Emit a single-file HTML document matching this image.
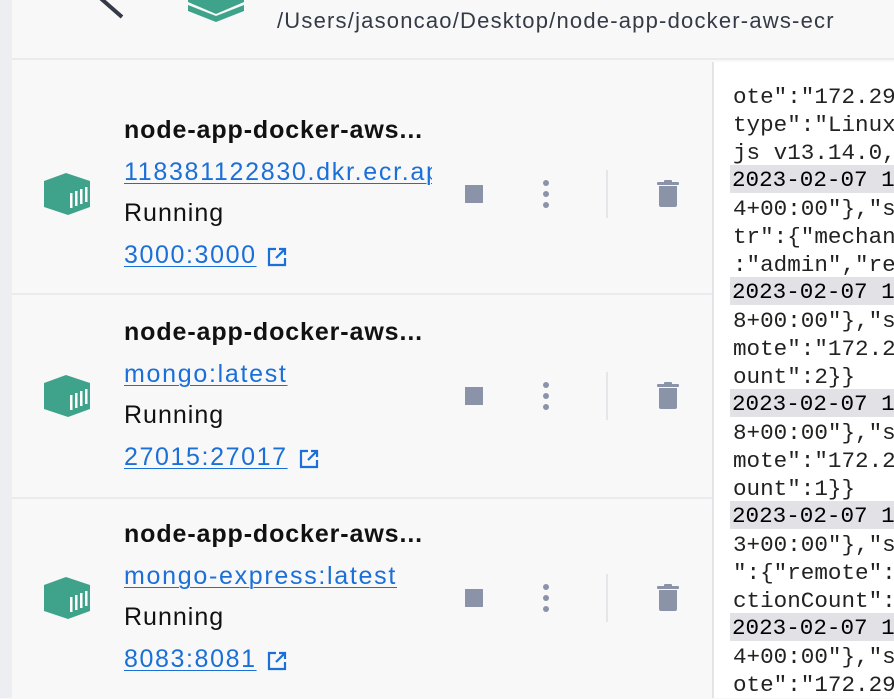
<!DOCTYPE html>
<html><head><meta charset="utf-8"><style>
*{margin:0;padding:0;box-sizing:border-box}
body{width:894px;height:698px;overflow:hidden;background:#f8f8f8;font-family:"Liberation Sans",sans-serif;position:relative}
.strip{position:absolute;left:0;top:0;width:12px;height:698px;background:#eceef1}
.hdr{position:absolute;left:12px;top:0;width:882px;height:60px;background:#f8f8f8;border-bottom:2px solid #ebebed}
.path{position:absolute;left:265px;top:8px;font-size:22px;letter-spacing:1.2px;color:#343a46;white-space:nowrap}
.row{position:absolute;left:12px;width:700px;height:202px;border-bottom:2px solid #ebebed;background:#f8f8f8}
.t{position:absolute;left:112px;font-size:25px;white-space:nowrap}
.name{font-weight:bold;color:#111;letter-spacing:0.9px}
.lnk{color:#1a6fd8;text-decoration:underline;text-decoration-thickness:1px;text-underline-offset:3px;overflow:hidden;max-width:308px;letter-spacing:1.7px}
.port{letter-spacing:1.6px}
.run{color:#111;letter-spacing:1px}
.log{position:absolute;left:712px;top:62px;width:182px;height:636px;background:#fff;border-left:2px solid #e4e4e8;font-family:"Liberation Mono",monospace;font-size:22.6px;color:#222;overflow:hidden}
.l{position:absolute;left:17px;width:200px;height:28px;line-height:28px;white-space:pre;padding-left:2px}
.h{background:#e2e2e6;color:#000;left:16px}
</style></head><body>
<div class="strip"></div>
<div class="hdr">
<svg width="300" height="60" style="position:absolute;left:-12px;top:0">
<line x1="98" y1="-4" x2="122" y2="17" stroke="#343a46" stroke-width="4"/>
<polygon points="188,0 244,0 244,2 216,14 188,2" fill="#3fa38b"/>
<polygon points="188,5 216,16 244,5 244,11 216,22 188,11" fill="#3fa38b"/>
</svg>
<div class="path">/Users/jasoncao/Desktop/node-app-docker-aws-ecr</div>
</div>

<div class="row" style="top:62px;height:233px">
<div class="t name" style="top:54px">node-app-docker-aws...</div>
<div class="t lnk" style="top:96px">118381122830.dkr.ecr.ap</div>
<div class="t run" style="top:137px">Running</div>
<div class="t lnk port" style="top:179px">3000:3000</div>
</div>
<div class="row" style="top:297px">
<div class="t name" style="top:21px">node-app-docker-aws...</div>
<div class="t lnk" style="top:63px">mongo:latest</div>
<div class="t run" style="top:104px">Running</div>
<div class="t lnk port" style="top:146px">27015:27017</div>
</div>
<div class="row" style="top:499px;height:200px;border:none">
<div class="t name" style="top:21px">node-app-docker-aws...</div>
<div class="t lnk" style="top:63px">mongo-express:latest</div>
<div class="t run" style="top:104px">Running</div>
<div class="t lnk port" style="top:146px">8083:8081</div>
</div>

<svg width="712" height="698" style="position:absolute;left:0;top:0">
<defs>
<g id="box">
<polygon points="0,8 22,0 46,8 46,34 24,42 0,34" fill="#3fa38b"/>
<rect x="26" y="20" width="2.5" height="15" fill="#fff"/>
<rect x="31" y="18" width="2.5" height="15" fill="#fff"/>
<rect x="36" y="16" width="2.5" height="15" fill="#fff"/>
<rect x="41" y="14" width="2.5" height="15" fill="#fff"/>
</g>
<g id="acts">
<rect x="465" y="-9" width="18" height="18" fill="#8a93a8"/>
<circle cx="546" cy="-11" r="3" fill="#8a93a8"/>
<circle cx="546" cy="0" r="3" fill="#8a93a8"/>
<circle cx="546" cy="11" r="3" fill="#8a93a8"/>
<rect x="606" y="-24" width="2" height="48" fill="#e6e6ea"/>
<rect x="657" y="-12" width="22" height="3" rx="1" fill="#8a93a8"/>
<rect x="664" y="-14" width="8" height="3" rx="1" fill="#8a93a8"/>
<path d="M659,-8 H677 V11 a2,2 0 0 1 -2,2 H661 a2,2 0 0 1 -2,-2 Z" fill="#8a93a8"/>
</g>
<g id="ext" fill="none" stroke="#1a6fd8" stroke-width="2.2">
<path d="M8,1 H1 V17 H17 V10"/><path d="M11,1 H17 V7 M17,1 L8,10"/>
</g>
</defs>
<use href="#box" x="44" y="173"/><use href="#box" x="44" y="375"/><use href="#box" x="44" y="577"/>
<use href="#acts" x="0" y="194"/><use href="#acts" x="0" y="396"/><use href="#acts" x="0" y="598"/>
<use href="#ext" x="268" y="248"/><use href="#ext" x="300" y="450"/><use href="#ext" x="268" y="652"/>
</svg>

<div class="log">
<div class="l" style="top:21px">ote":"172.29</div>
<div class="l" style="top:49px">type":"Linux</div>
<div class="l" style="top:77px">js v13.14.0,</div>
<div class="l h" style="top:103px;line-height:30px">2023-02-07 1</div>
<div class="l" style="top:133px">4+00:00"},"s</div>
<div class="l" style="top:161px">tr":{"mechan</div>
<div class="l" style="top:189px">:"admin","re</div>
<div class="l h" style="top:215px;line-height:30px">2023-02-07 1</div>
<div class="l" style="top:245px">8+00:00"},"s</div>
<div class="l" style="top:273px">mote":"172.2</div>
<div class="l" style="top:301px">ount":2}}</div>
<div class="l h" style="top:327px;line-height:30px">2023-02-07 1</div>
<div class="l" style="top:357px">8+00:00"},"s</div>
<div class="l" style="top:385px">mote":"172.2</div>
<div class="l" style="top:413px">ount":1}}</div>
<div class="l h" style="top:439px;line-height:30px">2023-02-07 1</div>
<div class="l" style="top:469px">3+00:00"},"s</div>
<div class="l" style="top:497px">":{"remote":</div>
<div class="l" style="top:525px">ctionCount":</div>
<div class="l h" style="top:551px;line-height:30px">2023-02-07 1</div>
<div class="l" style="top:581px">4+00:00"},"s</div>
<div class="l" style="top:609px">ote":"172.29</div>
</div>
</body></html>
